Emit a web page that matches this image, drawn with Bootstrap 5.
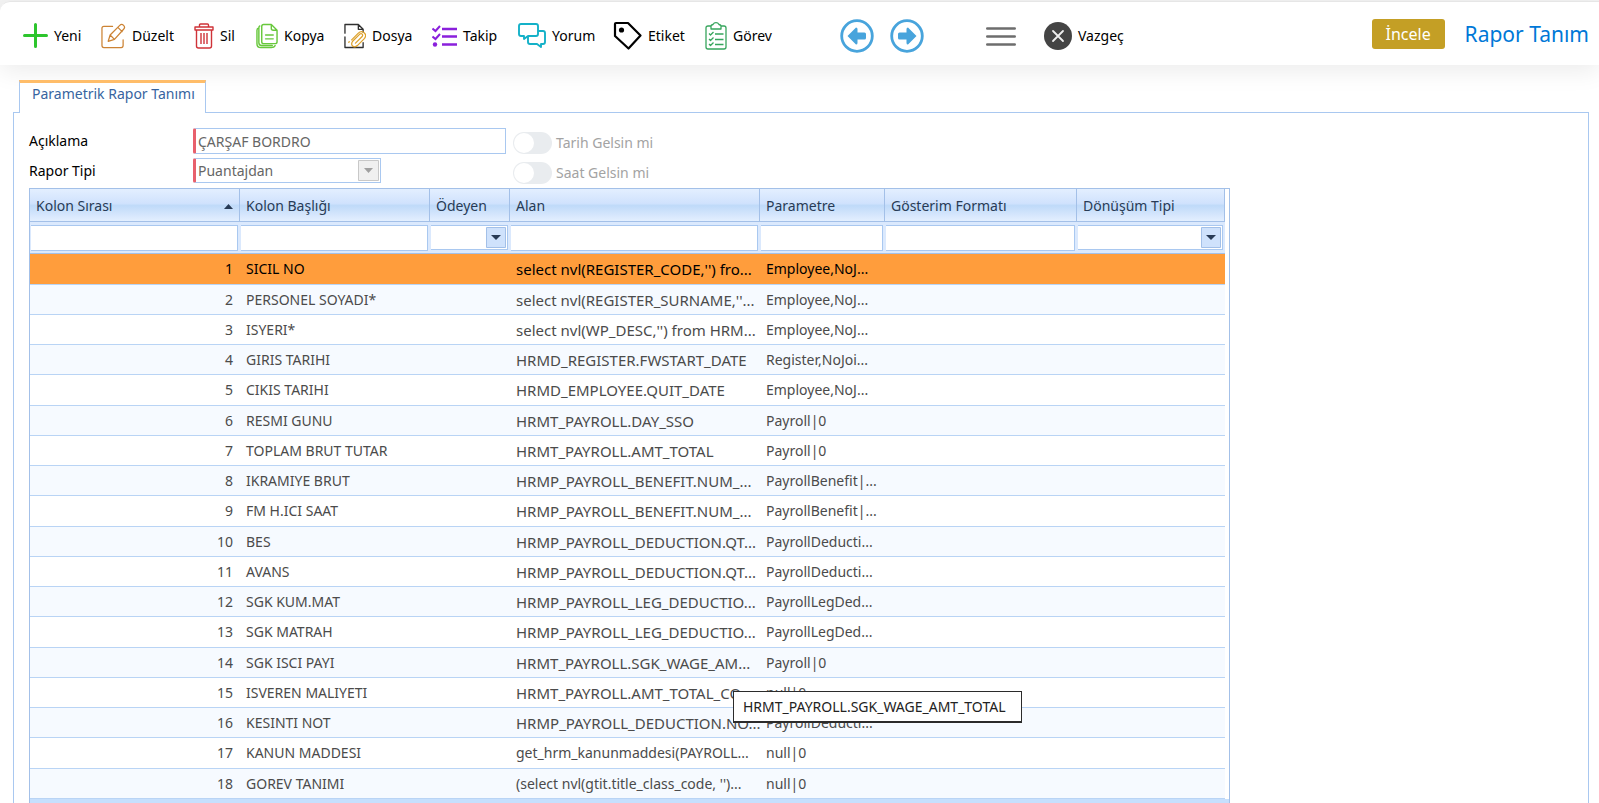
<!DOCTYPE html>
<html lang="tr">
<head>
<meta charset="utf-8">
<meta name="viewport" content="width=device-width, initial-scale=1">
<title>Rapor Tanım</title>
<link href="https://cdn.jsdelivr.net/npm/bootstrap@5.3.0/dist/css/bootstrap.min.css" rel="stylesheet">
<style>
  body { font-family: "Noto Sans", sans-serif; font-size: 14px; line-height: 20px; color: #000; background: #f3f3f3; padding-top: 1px; }
  .page-body { background: #fff; border-radius: 10px 0 0 0; }
  .toolbar { height: 64px; padding: 4px 10px 0 23px; border-radius: 10px 0 0 0; background: #fff; box-shadow: 0 6px 24px rgba(0,0,0,.08); border-top: 1px solid #e6e6e6; }
  .tool-list { display: grid; grid-template-columns: 78px 93px 62px 88px 88px 86px 95px 92px 80px; }
  .tool { display: flex; align-items: center; gap: 6px; padding: 0; border: 0; background: none; color: #000; white-space: nowrap; height: 34px; }
  .tool svg, .round-nav svg { flex: none; display: block; }
  .round-nav { border: 0; padding: 0; background: none; }
  .nav-group { margin-left: 55px; gap: 16px; }
  .menu-btn { margin-left: 62px; }
  .cancel-btn { margin-left: 28px; }
  .title-group { gap: 20px; padding-bottom: 3px; }
  .review-btn { background: #c49f25; color: #fff; border: 0; border-radius: 3px; height: 30px; width: 73px; padding: 0; font-size: 16px; }
  .page-title { font-size: 21px; line-height: 30px; color: #0078d7; margin: 0; }
  .tab-row { padding: 15px 0 0 19px; position: relative; z-index: 1; }
  .form-tab { display: block; margin-bottom: -1px; height: 33px; padding: 1px 12px 0; width: 187px; white-space: nowrap; border: 1px solid #a9c8f0; border-top: 3px solid #ffbd69; border-bottom: 0; background: #fff; color: #3764a0; text-decoration: none; }
  .panel { margin: 0 10px 0 13px; padding: 15px 0 0 15px; border: 1px solid #a9c8f0; border-bottom: 0; }
  .form-line { height: 30px; align-items: flex-start; }
  .form-line .caption { width: 164px; padding-top: 3px; }
  .field-slot { width: 320px; }
  .entry { height: 26px; width: 313px; border: 1px solid #a9c8f0; border-left: 3px solid #e8606c; border-radius: 2px 0 0 2px; padding: 0 2px; color: #666; background: #fff; display: block; outline: 0; opacity: 1; }
  .pick { position: relative; width: 188px; }
  .pick select { width: 188px; height: 25px; padding-top: 1px; appearance: none; }
  .pick svg, .filter-pick svg { position: absolute; pointer-events: none; }
  .pick svg { right: 2px; top: 2px; }
  .toggle { display: flex; align-items: center; gap: 4px; margin: 4px 0 0; color: #a3a3a3; }
  .toggle input { appearance: none; width: 39px; height: 22px; border-radius: 11px; background: #e9ecef; margin: 0; position: relative; }
  .toggle input::before { content: ""; position: absolute; left: 1px; top: 1px; width: 20px; height: 20px; border-radius: 50%; background: #fff; }
  .grid-box { width: 1201px; border: 1px solid #a3c0e8; border-bottom: 0; }
  .data-grid { width: 1195px; table-layout: fixed; border-collapse: separate; border-spacing: 0; color: #4b4b4b; }
  .data-grid th { height: 33px; padding: 2px 6px 0; font-weight: 400; color: #283b56; border-right: 1px solid #a3c0e8; border-bottom: 1px solid #a3c0e8; background: linear-gradient(#e3efff 0%, #d0e2fd 45%, #bfdaf9 52%, #d9e8fd 85%, #e3efff 100%); white-space: nowrap; }
  .filter-row td { height: 32px; padding: 0 2px 0 1px; background: #dbe9fd; border-bottom: 1px solid #a3c0e8; }
  .filter-row input, .filter-row select { display: block; width: 100%; height: 26px; border: 1px solid #a9c8f0; border-left: 0; border-radius: 0; background: #fff; padding: 0 4px; outline: 0; }
  .filter-row select { height: 25px; appearance: none; }
  .filter-pick { position: relative; margin-bottom: 1px; }
  .filter-pick svg { right: 2px; top: 2px; }
  .data-rows tr { height: 30px; }
  .data-rows tr:nth-child(4n+1) { height: 31px; }
  .data-rows tr:nth-child(even) { background: #f6faff; }
  .data-rows td { padding: 0 6px; border-bottom: 1px solid #b9d4f5; white-space: nowrap; line-height: 20px; }
  .data-rows tr.picked { background: #ff9d3c; color: #000; }
  .data-rows td:first-child { text-align: right; padding-right: 7px; }
  .data-rows .query { font-size: 15px; }
  .hint { position: absolute; left: 223px; top: 43px; z-index: 2; width: 289px; height: 32px; padding: 5px 9px; background: #fff; border: 1px solid #2b2b2b; border-bottom-width: 2px; color: #222; font-size: 14px; }
  .grid-foot { background: #c6dffd; width: 1199px; height: 5px; }
</style>
<script src="https://cdn.jsdelivr.net/npm/bootstrap@5.3.0/dist/js/bootstrap.bundle.min.js"></script>
</head>
<body>
<div class="page-body">
<header class="toolbar d-flex align-items-center">
  <div class="tool-list">
    <button class="tool"><svg width="25" height="25" viewBox="0 0 25 25" stroke="#2dc52d" stroke-width="3" stroke-linecap="round"><path d="M12.500 1.500v22M1.500 12.500h22"/></svg>Yeni</button>
    <button class="tool"><svg width="25" height="26" viewBox="0 0 26 26" fill="none" stroke="#cc8334" stroke-width="1.300" stroke-linejoin="round" stroke-linecap="round"><path d="M12 3H3a2 2 0 0 0-2 2v18a2 2 0 0 0 2 2h18a2 2 0 0 0 2-2v-6M7.500 18.500l2-6.500L19.500 2q2-2 4 0t0 4L14 16.500zM17.500 4l4.500 4.500M9.500 12l4.500 4.500"/></svg>Düzelt</button>
    <button class="tool"><svg width="20" height="26" viewBox="0 0 20 26" fill="none" stroke="#cf3339" stroke-width="1.400" stroke-linejoin="round"><path d="M1 4h18v3H1zM5.500 4V2q0-1 1-1h7q1 0 1 1v2M2.500 7v16q0 2 2 2h11q2 0 2-2V7M7 10v11M10 10v11M13 10v11"/></svg>Sil</button>
    <button class="tool"><svg width="22" height="26" viewBox="0 0 23 26" fill="none" stroke="#68c83c" stroke-width="1.500" stroke-linejoin="round" stroke-linecap="round"><path d="M8 1h8l6 6v12q0 2-2 2H8q-2 0-2-2V3q0-2 2-2zM16 1v4q0 2 2 2h4M10 12h8M10 16h8M4 2.500Q3 3 3 5v15q0 3 3 3h11M3 4.500Q1 5 1 7v14q0 4 4 4h11q3 0 4-2"/></svg>Kopya</button>
    <button class="tool"><svg width="22" height="26" viewBox="0 0 23 26" fill="none" stroke-linejoin="round" stroke-linecap="round"><path stroke="#303030" stroke-width="1.400" d="M1 10V1h14l5 5v3M15 1v5h5M1 14v11h19v-5"/><path stroke="#dda12b" stroke-width="1.300" d="M8 17l7-7q3-3 6-.5t.5 6L14 23q-3 2.500-5 .5t0-5l7.500-7.500q1.500-1 2.500 0t0 2.500L12 20.500M5 19.500l.5-.5"/></svg>Dosya</button>
    <button class="tool"><svg width="25" height="24" viewBox="0 0 25 24" fill="none" stroke="#8a20dc" stroke-width="2.600"><path d="M10 5h15M10 12.500h15M10 20.500h15"/><path stroke-width="2" d="M0.500 4.500l3 2.500 4.500-5M0.500 12.500l3 2.500 4.500-5"/><circle cx="3" cy="20.500" r="2.200" fill="#8a20dc" stroke="none"/></svg>Takip</button>
    <button class="tool"><svg width="28" height="26" viewBox="0 0 28 26" fill="none" stroke="#14b1c8" stroke-width="1.900" stroke-linejoin="round"><path d="M3 1h15q2 0 2 2v8q0 2-2 2h-8l-4 3v-3H3q-2 0-2-2V3q0-2 2-2zM20 8h5q2 0 2 2v9q0 2-2 2h-2v3l-4-3h-7q-2 0-2-2v-5"/></svg>Yorum</button>
    <button class="tool"><svg width="29" height="30" viewBox="0 0 29 30" fill="none" stroke="#000" stroke-width="2.200" stroke-linejoin="round"><path d="M3 2h12l12.500 12.500-12 13L2 15V3q0-1 1-1z"/><circle cx="8.500" cy="9" r="2.600" fill="#000" stroke="none"/></svg>Etiket</button>
    <button class="tool"><svg width="22" height="28" viewBox="0 0 22 28" fill="none" stroke="#36a55c" stroke-width="1.300" stroke-linejoin="round"><path d="M6 4H3Q1 4 1 6v19q0 2 2 2h16q2 0 2-2V6q0-2-2-2h-3M6 7V4q0-1 2-1.500 1-1.800 3-1.800t3 1.800q2 .5 2 1.500v3zM10 12h8.500M10 17.500h8.500M10 22.500h8.500M4 11.500l1.500 1.500L8.500 10M4 17l1.500 1.500 3-3M4 22l1.500 1.500 3-3"/></svg>Görev</button>
  </div>
  <div class="nav-group d-flex">
    <button class="round-nav" aria-label="Önceki"><svg width="34" height="34" viewBox="0 0 34 34"><circle cx="17" cy="17" r="15.300" fill="#fff" stroke="#48a4dc" stroke-width="2.800"/><path d="M7.500 17l8.500-8.500q1.500 0 1.500 1.500v3.500h7q1.500 0 1.500 1.500v4q0 1.500-1.500 1.500h-7V24q0 1.500-1.500 1.500z" fill="#48a4dc"/></svg></button>
    <button class="round-nav" aria-label="Sonraki"><svg width="34" height="34" viewBox="0 0 34 34"><circle cx="17" cy="17" r="15.300" fill="#fff" stroke="#48a4dc" stroke-width="2.800"/><path d="M26.500 17L18 8.500q-1.500 0-1.500 1.500v3.500h-7Q8 13.500 8 15v4q0 1.500 1.500 1.500h7V24q0 1.500 1.500 1.500z" fill="#48a4dc"/></svg></button>
  </div>
  <button class="round-nav menu-btn" aria-label="Menü"><svg width="30" height="20" viewBox="0 0 30 20" stroke="#6d6d6d" stroke-width="2.600" stroke-linecap="round"><path d="M1.300 2.500h27.400M1.300 10.500h27.400M1.300 18.500h27.400"/></svg></button>
  <button class="tool cancel-btn"><svg width="28" height="28" viewBox="0 0 28 28"><circle cx="14" cy="14" r="14" fill="#444"/><path d="M9 9l10 10M19 9L9 19" stroke="#eee" stroke-width="1.800" stroke-linecap="round"/></svg>Vazgeç</button>
  <div class="title-group d-flex align-items-center ms-auto">
    <button class="review-btn">İncele</button>
    <h1 class="page-title fw-normal text-nowrap">Rapor Tanım</h1>
  </div>
</header>

<main>
  <nav class="tab-row d-flex"><a class="form-tab" href="#report">Parametrik Rapor Tanımı</a></nav>
  <section class="panel" id="report">
    <div class="form-line d-flex">
      <label class="caption" for="desc">Açıklama</label>
      <div class="field-slot"><input class="entry" id="desc" value="ÇARŞAF BORDRO" readonly></div>
      <label class="toggle"><input type="checkbox" role="switch" disabled>Tarih Gelsin mi</label>
    </div>
    <div class="form-line d-flex">
      <label class="caption" for="kind">Rapor Tipi</label>
      <div class="field-slot"><div class="pick"><select class="entry" id="kind" disabled><option>Puantajdan</option></select><svg width="21" height="21"><path d="M.5.5h20v20H.5z" fill="#f0f0f0" stroke="#c8c8c8"/><path d="M6 8h9l-4.500 5z" fill="#a0a0a0"/></svg></div></div>
      <label class="toggle"><input type="checkbox" role="switch" disabled>Saat Gelsin mi</label>
    </div>
    <div class="grid-box">
      <table class="data-grid">
        <colgroup><col style="width:210px"><col style="width:190px"><col style="width:80px"><col style="width:250px"><col style="width:125px"><col style="width:192px"><col style="width:148px"></colgroup>
        <thead>
          <tr><th><div class="d-flex justify-content-between align-items-center">Kolon Sırası<svg width="9" height="5"><path d="M0 5h9L4.500 0z" fill="#283b56"/></svg></div></th><th>Kolon Başlığı</th><th>Ödeyen</th><th>Alan</th><th>Parametre</th><th>Gösterim Formatı</th><th>Dönüşüm Tipi</th></tr>
          <tr class="filter-row">
            <td><input aria-label="Kolon Sırası"></td>
            <td><input aria-label="Kolon Başlığı"></td>
            <td><div class="filter-pick"><select aria-label="Ödeyen"><option></option></select><svg width="20" height="21"><path d="M.5.5h19v20H.5z" fill="#cfe2fc" stroke="#a3c0e8"/><path d="M5 8h10l-5 5z" fill="#283b56"/></svg></div></td>
            <td><input aria-label="Alan"></td>
            <td><input aria-label="Parametre"></td>
            <td><input aria-label="Gösterim Formatı"></td>
            <td><div class="filter-pick"><select aria-label="Dönüşüm Tipi"><option></option></select><svg width="20" height="21"><path d="M.5.5h19v20H.5z" fill="#cfe2fc" stroke="#a3c0e8"/><path d="M5 8h10l-5 5z" fill="#283b56"/></svg></div></td>
          </tr>
        </thead>
        <tbody class="data-rows">
          <tr class="picked"><td>1</td><td>SICIL NO</td><td></td><td class="query">select nvl(REGISTER_CODE,'') fro...</td><td>Employee,NoJ...</td><td></td><td></td></tr>
          <tr><td>2</td><td>PERSONEL SOYADI*</td><td></td><td class="query">select nvl(REGISTER_SURNAME,''...</td><td>Employee,NoJ...</td><td></td><td></td></tr>
          <tr><td>3</td><td>ISYERI*</td><td></td><td class="query">select nvl(WP_DESC,'') from HRM...</td><td>Employee,NoJ...</td><td></td><td></td></tr>
          <tr><td>4</td><td>GIRIS TARIHI</td><td></td><td class="query">HRMD_REGISTER.FWSTART_DATE</td><td>Register,NoJoi...</td><td></td><td></td></tr>
          <tr><td>5</td><td>CIKIS TARIHI</td><td></td><td class="query">HRMD_EMPLOYEE.QUIT_DATE</td><td>Employee,NoJ...</td><td></td><td></td></tr>
          <tr><td>6</td><td>RESMI GUNU</td><td></td><td class="query">HRMT_PAYROLL.DAY_SSO</td><td>Payroll|0</td><td></td><td></td></tr>
          <tr><td>7</td><td>TOPLAM BRUT TUTAR</td><td></td><td class="query">HRMT_PAYROLL.AMT_TOTAL</td><td>Payroll|0</td><td></td><td></td></tr>
          <tr><td>8</td><td>IKRAMIYE BRUT</td><td></td><td class="query">HRMP_PAYROLL_BENEFIT.NUM_...</td><td>PayrollBenefit|...</td><td></td><td></td></tr>
          <tr><td>9</td><td>FM H.ICI SAAT</td><td></td><td class="query">HRMP_PAYROLL_BENEFIT.NUM_...</td><td>PayrollBenefit|...</td><td></td><td></td></tr>
          <tr><td>10</td><td>BES</td><td></td><td class="query">HRMP_PAYROLL_DEDUCTION.QT...</td><td>PayrollDeducti...</td><td></td><td></td></tr>
          <tr><td>11</td><td>AVANS</td><td></td><td class="query">HRMP_PAYROLL_DEDUCTION.QT...</td><td>PayrollDeducti...</td><td></td><td></td></tr>
          <tr><td>12</td><td>SGK KUM.MAT</td><td></td><td class="query">HRMP_PAYROLL_LEG_DEDUCTIO...</td><td>PayrollLegDed...</td><td></td><td></td></tr>
          <tr><td>13</td><td>SGK MATRAH</td><td></td><td class="query">HRMP_PAYROLL_LEG_DEDUCTIO...</td><td>PayrollLegDed...</td><td></td><td></td></tr>
          <tr><td>14</td><td>SGK ISCI PAYI</td><td></td><td class="query position-relative">HRMT_PAYROLL.SGK_WAGE_AM...<div class="hint" role="tooltip">HRMT_PAYROLL.SGK_WAGE_AMT_TOTAL</div></td><td>Payroll|0</td><td></td><td></td></tr>
          <tr><td>15</td><td>ISVEREN MALIYETI</td><td></td><td class="query">HRMT_PAYROLL.AMT_TOTAL_CO...</td><td>null|0</td><td></td><td></td></tr>
          <tr><td>16</td><td>KESINTI NOT</td><td></td><td class="query">HRMP_PAYROLL_DEDUCTION.NO...</td><td>PayrollDeducti...</td><td></td><td></td></tr>
          <tr><td>17</td><td>KANUN MADDESI</td><td></td><td>get_hrm_kanunmaddesi(PAYROLL...</td><td>null|0</td><td></td><td></td></tr>
          <tr><td>18</td><td>GOREV TANIMI</td><td></td><td>(select nvl(gtit.title_class_code, '')...</td><td>null|0</td><td></td><td></td></tr>
        </tbody>
      </table>
      <div class="grid-foot"></div>
    </div>
  </section>
</main>
</div>
</body>
</html>
